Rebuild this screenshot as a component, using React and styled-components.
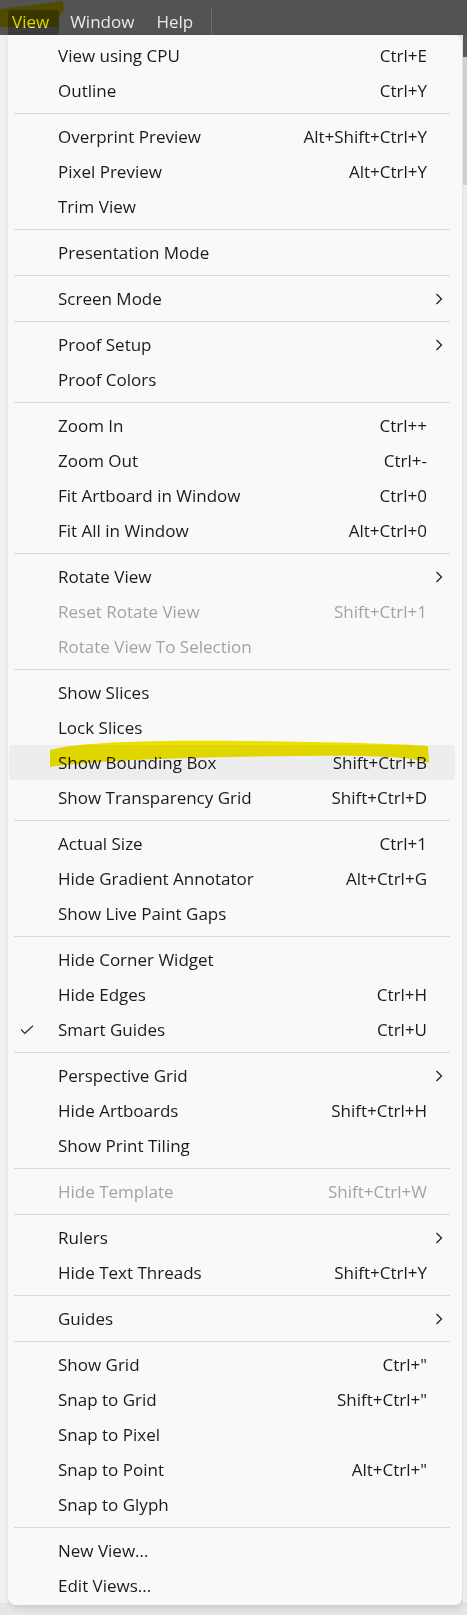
import styled, { createGlobalStyle } from "styled-components";

const GlobalStyle = createGlobalStyle`
  body {
    margin: 0;
    background: #e9e9e9;
    font-family: "Open Sans", "Noto Sans", sans-serif;
  }
`;

const Page = styled.div`
  position: relative;
  width: 467px;
  height: 1615px;
  overflow: hidden;
  background: #e6e6e6;
`;

const MenuBar = styled.div`
  height: 35px;
  background: #535353;
  display: flex;
  align-items: flex-end;
  padding-left: 8px;
  box-sizing: border-box;
`;

const MenuTitle = styled.div`
  height: 25px;
  padding: ${(p) => (p.$active ? "0 10px 0 4px" : "0 11px")};
  border-radius: 4px 4px 0 0;
  background: ${(p) => (p.$active ? "#3c3c3c" : "transparent")};
  color: #e8e8e8;
  font-size: 17px;
  line-height: 23px;
`;

const BarDivider = styled.div`
  width: 1px;
  height: 27px;
  background: #6b6b6b;
  margin-left: 7px;
`;

const Body = styled.div`
  display: flex;
`;

const Gutter = styled.div`
  width: 8px;
  height: 1568px;
  background: #f1f1f1;
`;

const Panel = styled.div`
  width: 455px;
  box-sizing: border-box;
  background: #f9f9f9;
  border-radius: 0 8px 8px 8px;
  padding: 3px 0 2px;
  box-shadow: 1px 3px 6px rgba(0, 0, 0, 0.12);
  border-right: 1px solid #e2e2e2;
`;

const RightStrip = styled.div`
  width: 4px;
  height: 1568px;
  background: linear-gradient(#5a5a5a 0, #5a5a5a 22px, #cfcfcf 22px, #cfcfcf 150px, #ececec 150px);
`;

const Item = styled.div`
  display: grid;
  grid-template-columns: 49px 1fr auto 28px;
  align-items: center;
  height: 35px;
  margin: 0 7px 0 1px;
  border-radius: 4px;
  background: ${(p) => (p.$hover ? "#ededed" : "transparent")};
  color: ${(p) => (p.$disabled ? "#a3a3a3" : "#1b1b1b")};
  font-size: 17px;
  white-space: nowrap;
`;

const CheckCell = styled.div`
  padding-left: 11px;
  display: flex;
  align-items: center;
`;

const Shortcut = styled.span`
  text-align: right;
`;

const ArrowCell = styled.div`
  padding-left: 8px;
  display: flex;
  align-items: center;
`;

const Separator = styled.div`
  height: 1px;
  background: #dadada;
  margin: 5px 12px 5px 6px;
`;

const Marker = styled.svg`
  position: absolute;
  left: 0;
  top: 0;
  mix-blend-mode: multiply;
  pointer-events: none;
`;

const groups = [
  [["View using CPU", "Ctrl+E"], ["Outline", "Ctrl+Y"]],
  [["Overprint Preview", "Alt+Shift+Ctrl+Y"], ["Pixel Preview", "Alt+Ctrl+Y"], ["Trim View"]],
  [["Presentation Mode"]],
  [["Screen Mode", null, { sub: true }]],
  [["Proof Setup", null, { sub: true }], ["Proof Colors"]],
  [["Zoom In", "Ctrl++"], ["Zoom Out", "Ctrl+-"], ["Fit Artboard in Window", "Ctrl+0"], ["Fit All in Window", "Alt+Ctrl+0"]],
  [["Rotate View", null, { sub: true }], ["Reset Rotate View", "Shift+Ctrl+1", { disabled: true }], ["Rotate View To Selection", null, { disabled: true }]],
  [["Show Slices"], ["Lock Slices"], ["Show Bounding Box", "Shift+Ctrl+B", { hover: true }], ["Show Transparency Grid", "Shift+Ctrl+D"]],
  [["Actual Size", "Ctrl+1"], ["Hide Gradient Annotator", "Alt+Ctrl+G"], ["Show Live Paint Gaps"]],
  [["Hide Corner Widget"], ["Hide Edges", "Ctrl+H"], ["Smart Guides", "Ctrl+U", { checked: true }]],
  [["Perspective Grid", null, { sub: true }], ["Hide Artboards", "Shift+Ctrl+H"], ["Show Print Tiling"]],
  [["Hide Template", "Shift+Ctrl+W", { disabled: true }]],
  [["Rulers", null, { sub: true }], ["Hide Text Threads", "Shift+Ctrl+Y"]],
  [["Guides", null, { sub: true }]],
  [["Show Grid", 'Ctrl+"'], ["Snap to Grid", 'Shift+Ctrl+"'], ["Snap to Pixel"], ["Snap to Point", 'Alt+Ctrl+"'], ["Snap to Glyph"]],
  [["New View..."], ["Edit Views..."]],
];

const Check = () => (
  <svg width="14" height="10" viewBox="0 0 14 10">
    <path d="M1 4.5 L4.8 8.3 L13 0.8" fill="none" stroke="#333" strokeWidth="1.2" />
  </svg>
);

const Chevron = () => (
  <svg width="8" height="12" viewBox="0 0 8 12">
    <path d="M1.5 1 L6.5 6 L1.5 11" fill="none" stroke="#222" strokeWidth="1.3" />
  </svg>
);

const MenuItem = ({ label, shortcut, opts = {} }) => (
  <Item $hover={opts.hover} $disabled={opts.disabled}>
    <CheckCell>{opts.checked && <Check />}</CheckCell>
    <span>{label}</span>
    <Shortcut>{shortcut}</Shortcut>
    <ArrowCell>{opts.sub && <Chevron />}</ArrowCell>
  </Item>
);

export default function App() {
  return (
    <Page>
      <GlobalStyle />
      <MenuBar>
        <MenuTitle $active>View</MenuTitle>
        <MenuTitle>Window</MenuTitle>
        <MenuTitle>Help</MenuTitle>
        <BarDivider />
      </MenuBar>
      <Body>
        <Gutter />
        <Panel>
          {groups.map((g, gi) => (
            <div key={gi}>
              {gi > 0 && <Separator />}
              {g.map(([label, shortcut, opts]) => (
                <MenuItem key={label} label={label} shortcut={shortcut} opts={opts} />
              ))}
            </div>
          ))}
        </Panel>
        <RightStrip />
      </Body>
      <Marker width="467" height="800" viewBox="0 0 467 800">
        <path d="M0 9 L63 1 L64 10 L59 17 L59 27 L0 27 Z" fill="#f2e600" />
        <path
          d="M50 750 C80 742 150 740 250 741 C330 742 400 744 428 746 L429 763 C412 757 380 755 300 756 C200 757 100 760 50 767 Z"
          fill="#f2e600"
        />
      </Marker>
    </Page>
  );
}
